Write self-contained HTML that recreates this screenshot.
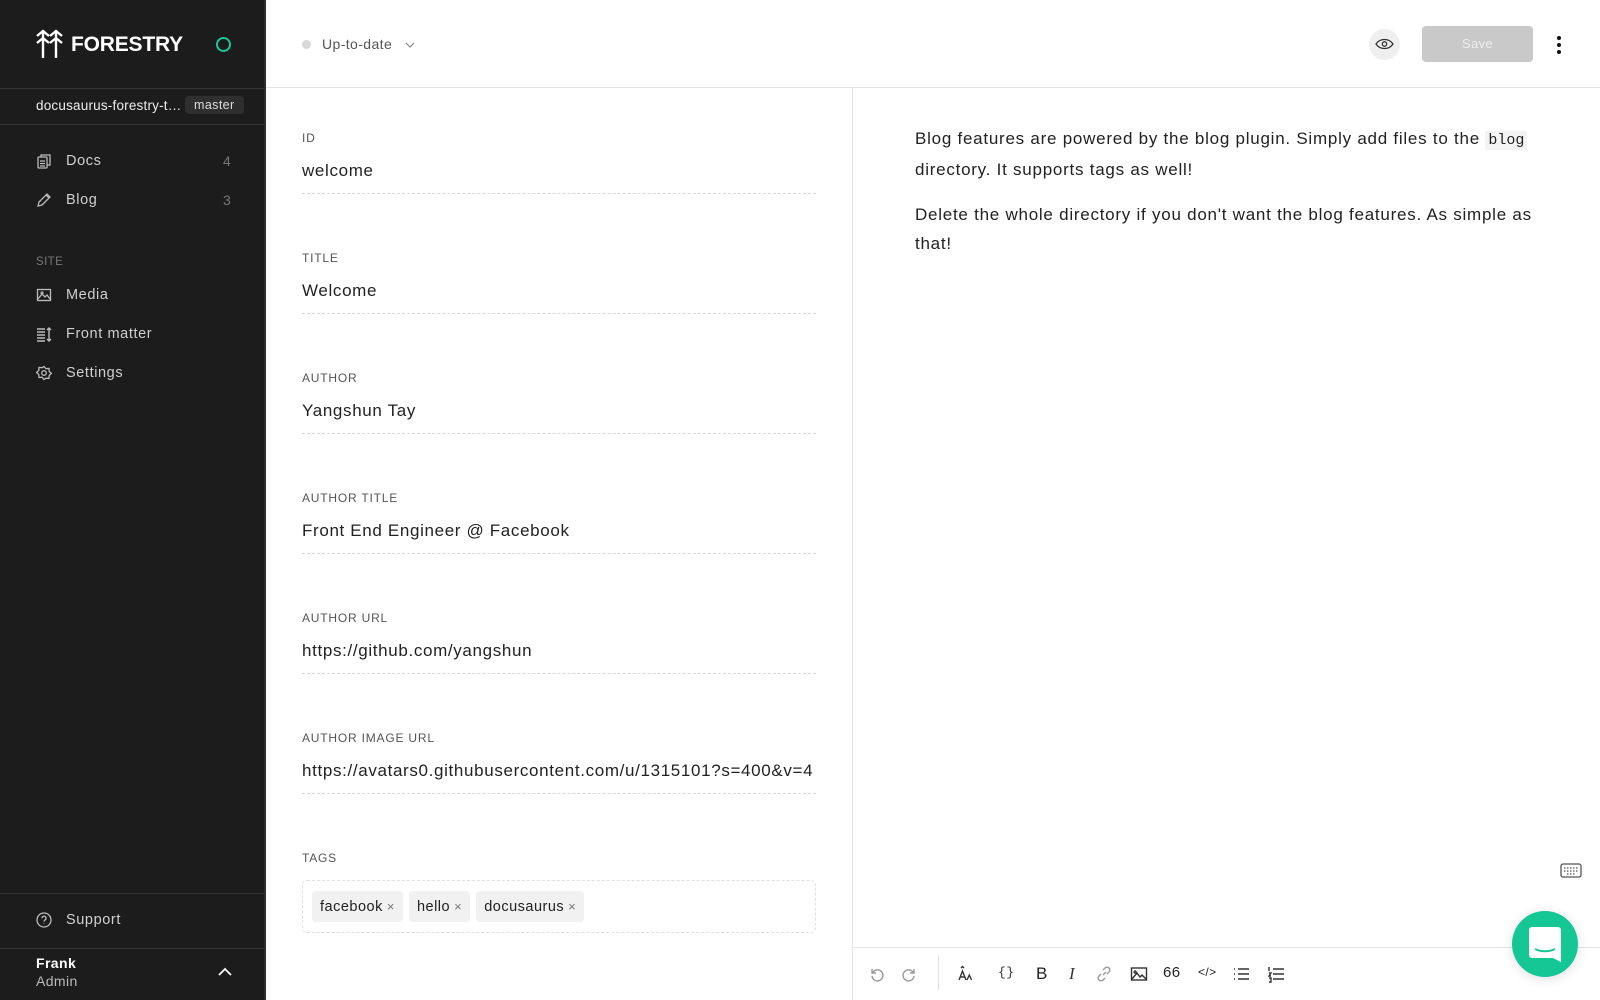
<!DOCTYPE html>
<html><head><meta charset="utf-8"><style>
*{box-sizing:border-box;margin:0;padding:0}
body{width:1600px;height:1000px;overflow:hidden;font-family:"Liberation Sans",sans-serif;background:#fff;position:relative;color:#222;letter-spacing:.4px}
.sb{position:absolute;left:0;top:0;width:266px;height:1000px;background:#1c1c1c;border-right:2px solid #2e2e2e;color:#cfcfcf}
.abs{position:absolute}
.nav{position:absolute;left:36px;font-size:14.5px;color:#cfcfcf;display:flex;align-items:center;gap:14px;letter-spacing:.6px}
.nav svg{width:16px;height:16px}
.cnt{position:absolute;left:223px;font-size:14px;color:#777}
.lbl{position:absolute;left:302px;font-size:12px;letter-spacing:.8px;color:#555}
.val{position:absolute;left:302px;font-size:17px;color:#222;width:514px;white-space:nowrap;overflow:hidden;letter-spacing:.65px}
.dash{position:absolute;left:302px;width:514px;border-top:1.5px dashed #d8d8d8}
.tag{display:inline-block;background:#f1f1f1;border-radius:4px;padding:0 8px;height:31px;line-height:31px;font-size:14.5px;margin-right:6px;color:#222;letter-spacing:.5px}
.tag span{color:#777;font-size:13px;margin-left:4px}
.tb svg{position:absolute;top:965px;width:18px;height:18px;fill:none;stroke:#333;stroke-width:1.4}
.ed{position:absolute;left:915px;width:620px;font-size:17px;line-height:29px;color:#222;letter-spacing:.75px}
</style></head><body>
<div class="sb">
 <svg class="abs" style="left:35px;top:28px" width="32" height="32" viewBox="0 0 32 32" fill="none" stroke="#fff" stroke-width="2.4"><path d="M8 2v28M2 8l6-5 6 5M2 15l6-5 6 5M21 2v28M15 8l6-5 6 5M15 15l6-5 6 5"/></svg>
 <div class="abs" style="left:71px;top:33px;font-size:21px;font-weight:bold;color:#fff;letter-spacing:-.2px">FORESTRY</div>
 <div class="abs" style="left:216px;top:37px;width:15px;height:15px;border:2.5px solid #19c794;border-radius:50%"></div>
 <div class="abs" style="left:0;top:88px;width:264px;border-top:1px solid #333"></div>
 <div class="abs" style="left:36px;top:98px;font-size:13.5px;color:#eee;letter-spacing:.2px">docusaurus-forestry-t…</div>
 <div class="abs" style="left:185px;top:96px;background:#2f2f2f;border-radius:4px;padding:2px 9px;font-size:12.5px;color:#ddd">master</div>
 <div class="abs" style="left:0;top:124px;width:264px;border-top:1px solid #333"></div>
 <div class="nav" style="top:153px"><svg viewBox="0 0 16 16" fill="none" stroke="#bbb" stroke-width="1.3"><rect x="2" y="4" width="9" height="11" rx="1"/><path d="M5 4V2h9v10h-3M4 8h5M4 10.5h5M4 13h5"/></svg>Docs</div><div class="cnt" style="top:153px">4</div>
 <div class="nav" style="top:192px"><svg viewBox="0 0 16 16" fill="none" stroke="#bbb" stroke-width="1.3"><path d="M2 14l1-4 8-8 3 3-8 8zM10 3l3 3"/></svg>Blog</div><div class="cnt" style="top:192px">3</div>
 <div class="abs" style="left:36px;top:256px;font-size:11.5px;color:#777">SITE</div>
 <div class="nav" style="top:287px"><svg viewBox="0 0 16 16" fill="none" stroke="#bbb" stroke-width="1.3"><rect x="1.5" y="2.5" width="13" height="11"/><path d="M2 12l4-5 3 3 2-2 3 4M5 6a1 1 0 100-.1"/></svg>Media</div>
 <div class="nav" style="top:326px"><svg viewBox="0 0 16 16" fill="none" stroke="#bbb" stroke-width="1.4"><path d="M1 3h8M1 6h8M1 9h8M1 12h8M1 15h8M13 2v13M11 4l2-2 2 2M11 13l2 2 2-2"/></svg>Front matter</div>
 <div class="nav" style="top:365px"><svg viewBox="0 0 16 16" fill="none" stroke="#bbb" stroke-width="1.3"><path d="M8 1.5l2 2.2 3-.2.2 3 2.2 1.9-2.2 2 -.2 3-3-.2L8 14.5 6 12.2l-3 .3-.2-3L.6 7.5 2.8 5.5l.2-3 3 .2z"/><circle cx="8" cy="8" r="2.3"/></svg>Settings</div>
 <div class="abs" style="left:0;top:893px;width:264px;border-top:1px solid #333"></div>
 <div class="nav" style="top:912px"><svg viewBox="0 0 16 16" fill="none" stroke="#bbb" stroke-width="1.3"><circle cx="8" cy="8" r="7"/><path d="M6 6.2a2 2 0 113 1.7c-.8.5-1 .9-1 1.7M8 11.5v.6"/></svg>Support</div>
 <div class="abs" style="left:0;top:948px;width:264px;border-top:1px solid #333"></div>
 <div class="abs" style="left:36px;top:955px;font-size:14px;color:#fff;font-weight:bold">Frank</div>
 <div class="abs" style="left:36px;top:973px;font-size:14px;color:#bbb">Admin</div>
 <svg class="abs" style="left:218px;top:967px" width="14" height="9" viewBox="0 0 14 9" fill="none" stroke="#fff" stroke-width="1.8"><path d="M1 8l6-6 6 6"/></svg>
</div>
<div class="abs" style="left:266px;top:87px;width:1334px;border-top:1.5px solid #e3e3e3"></div>
<div class="abs" style="left:302px;top:40px;width:9px;height:9px;border-radius:50%;background:#d8d8d8"></div>
<div class="abs" style="left:322px;top:36px;font-size:14px;color:#555">Up-to-date</div>
<svg class="abs" style="left:405px;top:42px" width="10" height="6" viewBox="0 0 10 6" fill="none" stroke="#888" stroke-width="1.2"><path d="M1 1l4 4 4-4"/></svg>
<div class="abs" style="left:1369px;top:29px;width:31px;height:31px;border-radius:50%;background:#efefef"></div>
<svg class="abs" style="left:1375px;top:38px" width="19" height="12" viewBox="0 0 19 12" fill="none" stroke="#333" stroke-width="1.3"><path d="M1 6c4-6 13-6 17 0-4 6-13 6-17 0z"/><circle cx="9.5" cy="6" r="2.2"/></svg>
<div class="abs" style="left:1422px;top:26px;width:111px;height:36px;border-radius:4px;background:#c9c9c9;color:#eee;font-size:13px;text-align:center;line-height:36px">Save</div>
<div class="abs" style="left:1557px;top:36px;width:4px;height:4px;border-radius:50%;background:#111;box-shadow:0 7px 0 #111,0 14px 0 #111"></div>
<div class="abs" style="left:852px;top:88px;height:912px;border-left:1.5px solid #e3e3e3"></div>
<div class="lbl" style="top:131px">ID</div><div class="val" style="top:161px">welcome</div><div class="dash" style="top:193px"></div>
<div class="lbl" style="top:251px">TITLE</div><div class="val" style="top:281px">Welcome</div><div class="dash" style="top:313px"></div>
<div class="lbl" style="top:371px">AUTHOR</div><div class="val" style="top:401px">Yangshun Tay</div><div class="dash" style="top:433px"></div>
<div class="lbl" style="top:491px">AUTHOR TITLE</div><div class="val" style="top:521px">Front End Engineer @ Facebook</div><div class="dash" style="top:553px"></div>
<div class="lbl" style="top:611px">AUTHOR URL</div><div class="val" style="top:641px">https://github.com/yangshun</div><div class="dash" style="top:673px"></div>
<div class="lbl" style="top:731px">AUTHOR IMAGE URL</div><div class="val" style="top:761px">https://avatars0.githubusercontent.com/u/1315101?s=400&amp;v=4</div><div class="dash" style="top:793px"></div>
<div class="lbl" style="top:851px">TAGS</div>
<div class="abs" style="left:302px;top:880px;width:514px;height:53px;border:1.5px dashed #e0e0e0;border-radius:5px;padding:10px 9px"><span class="tag">facebook<span>×</span></span><span class="tag">hello<span>×</span></span><span class="tag">docusaurus<span>×</span></span></div>
<div class="ed" style="top:124px">Blog features are powered by the blog plugin. Simply add files to the <code style="font-family:'Liberation Mono',monospace;font-size:15px;background:#f3f3f3;padding:1px 3px;letter-spacing:0">blog</code> directory. It supports tags as well!</div>
<div class="ed" style="top:200px">Delete the whole directory if you don't want the blog features. As simple as that!</div>
<svg class="abs" style="left:1560px;top:863px" width="22" height="15" viewBox="0 0 22 15" fill="none" stroke="#555" stroke-width="1.3"><rect x="1" y="1" width="20" height="13" rx="2"/><path d="M4 5h14M4 8h14M7 11h8" stroke-dasharray="1.5 1.5"/></svg>
<div class="abs" style="left:853px;top:947px;width:747px;border-top:1.5px solid #e6e6e6"></div>
<div class="abs" style="left:938px;top:956px;height:34px;border-left:1px solid #e3e3e3"></div>
<div class="tb">
<svg style="left:868px;stroke:#999" viewBox="0 0 18 18"><path d="M4 4v4h4M4.5 8A5.5 5.5 0 114 11"/></svg>
<svg style="left:900px;stroke:#999" viewBox="0 0 18 18"><path d="M14 4v4h-4M13.5 8A5.5 5.5 0 1014 11"/></svg>
<svg style="left:957px" viewBox="0 0 18 18"><path d="M2 15l3.5-9 3.5 9M3.2 12h4.6M10 15l2.3-5 2.3 5M4 3l1.5-1.5L7 3"/></svg>
<div class="abs" style="left:998px;top:965px;font-size:13px;color:#333;font-family:'Liberation Mono',monospace">{}</div>
<div class="abs" style="left:1036px;top:964px;font-size:17px;color:#222">B</div>
<div class="abs" style="left:1069px;top:964px;font-size:17px;color:#333;font-style:italic;font-family:'Liberation Serif',serif">I</div>
<svg style="left:1095px;stroke:#999" viewBox="0 0 18 18"><path d="M8 10l3-3M6 9l-2 2a2.5 2.5 0 004 4l2-2M12 9l2-2a2.5 2.5 0 00-4-4L8 5"/></svg>
<svg style="left:1130px" viewBox="0 0 18 18"><rect x="1.5" y="3" width="15" height="12"/><path d="M2 14l5-6 3 4 2-2 4 4M4 7a1 1 0 100-.1"/></svg>
<div class="abs" style="left:1163px;top:964px;font-size:15px;color:#222">66</div>
<div class="abs" style="left:1198px;top:965px;font-size:12px;color:#222">&lt;/&gt;</div>
<svg style="left:1232px" viewBox="0 0 18 18"><path d="M6 4h11M6 9h11M6 14h11M2 4h1M2 9h1M2 14h1"/></svg>
<svg style="left:1267px" viewBox="0 0 18 18"><path d="M6 4h11M6 9h11M6 14h11M2 2v4M2 8h2l-2 3h2M2 13h2v4H2"/></svg>
</div>
<div class="abs" style="left:1512px;top:911px;width:66px;height:66px;border-radius:50%;background:#14c795;box-shadow:0 2px 12px rgba(0,0,0,.12)"></div>
<svg class="abs" style="left:1529px;top:927px" width="32" height="36" viewBox="0 0 32 36"><path d="M3 0h26a3 3 0 013 3v32l-8-4H3a3 3 0 01-3-3V3a3 3 0 013-3z" fill="#fff"/><path d="M6 22c6 3 14 3 20 0" stroke="#14c795" stroke-width="2" fill="none"/></svg>
</body></html>
